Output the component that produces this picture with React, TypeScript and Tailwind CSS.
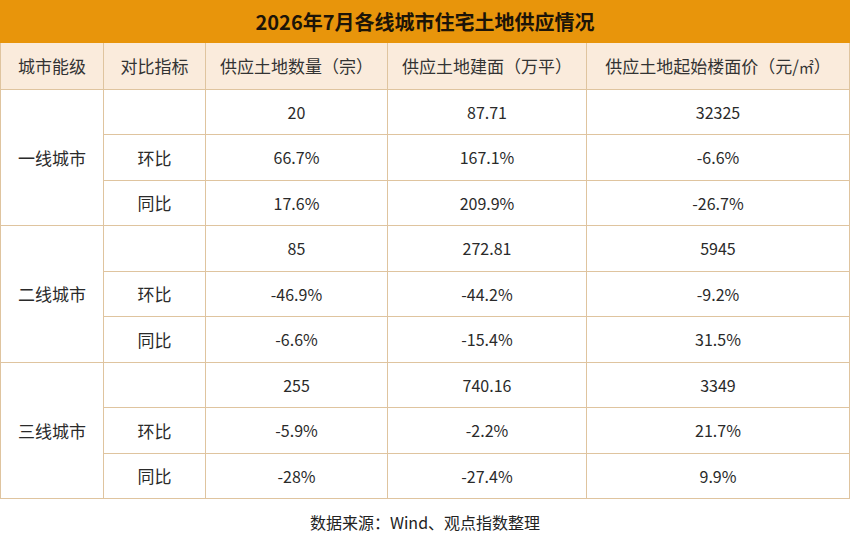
import React from "react";

type Group = {
  city: string;
  rows: { label: string; count: string; area: string; price: string }[];
};

const groups: Group[] = [
  {
    city: "一线城市",
    rows: [
      { label: "", count: "20", area: "87.71", price: "32325" },
      { label: "环比", count: "66.7%", area: "167.1%", price: "-6.6%" },
      { label: "同比", count: "17.6%", area: "209.9%", price: "-26.7%" },
    ],
  },
  {
    city: "二线城市",
    rows: [
      { label: "", count: "85", area: "272.81", price: "5945" },
      { label: "环比", count: "-46.9%", area: "-44.2%", price: "-9.2%" },
      { label: "同比", count: "-6.6%", area: "-15.4%", price: "31.5%" },
    ],
  },
  {
    city: "三线城市",
    rows: [
      { label: "", count: "255", area: "740.16", price: "3349" },
      { label: "环比", count: "-5.9%", area: "-2.2%", price: "21.7%" },
      { label: "同比", count: "-28%", area: "-27.4%", price: "9.9%" },
    ],
  },
];

const cell = "border-[1.5px] border-[#dfc49f] text-center align-middle";

function App() {
  return (
    <div
      className="w-[850px] h-[536px] bg-white text-[#2a2a2a] overflow-hidden"
      style={{ fontFamily: '"Noto Sans CJK SC", "Noto Sans", sans-serif' }}
    >
      <div className="h-[43px] bg-[#e8950b] flex items-center justify-center">
        <h1 className="text-[20px] font-bold text-[#1c1408]">2026年7月各线城市住宅土地供应情况</h1>
      </div>
      <table className="w-[849px] border-collapse table-fixed">
        <colgroup>
          <col className="w-[103px]" />
          <col className="w-[102px]" />
          <col className="w-[182px]" />
          <col className="w-[199px]" />
          <col className="w-[263px]" />
        </colgroup>
        <thead>
          <tr className="h-[46px] bg-[#faebdc] text-[17px] text-[#333]">
            <th className={`${cell} border-t-0 font-normal`}>城市能级</th>
            <th className={`${cell} border-t-0 font-normal`}>对比指标</th>
            <th className={`${cell} border-t-0 font-normal`}>供应土地数量（宗）</th>
            <th className={`${cell} border-t-0 font-normal`}>供应土地建面（万平）</th>
            <th className={`${cell} border-t-0 font-normal`}>
              供应土地起始楼面价（元/<span className="text-[15px]">㎡</span>）
            </th>
          </tr>
        </thead>
        <tbody className="text-[16px]">
          {groups.map((g) =>
            g.rows.map((r, i) => (
              <tr key={g.city + i} className="h-[45.5px]">
                {i === 0 && (
                  <td rowSpan={3} className={`${cell} text-[17px]`}>
                    {g.city}
                  </td>
                )}
                <td className={`${cell} text-[17px]`}>{r.label}</td>
                <td className={cell}>{r.count}</td>
                <td className={cell}>{r.area}</td>
                <td className={cell}>{r.price}</td>
              </tr>
            ))
          )}
        </tbody>
      </table>
      <div className="h-[46px] flex items-center justify-center text-[16px] text-[#222]">
        数据来源：Wind、观点指数整理
      </div>
    </div>
  );
}

export default App;
